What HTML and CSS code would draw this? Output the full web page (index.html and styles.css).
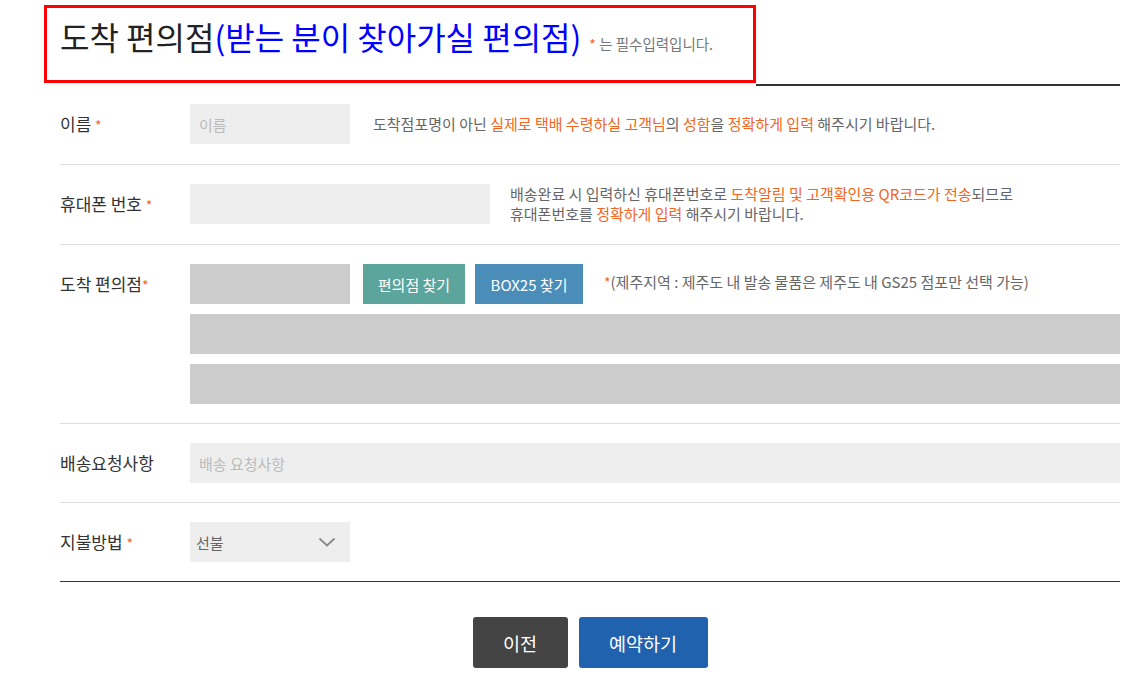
FILE: index.html
```html
<!DOCTYPE html>
<html>
  <head>
    <meta charset="utf-8">
    <link rel="stylesheet" href="styles.css">
  </head>
  <body>
    <div class="wrap">
      <div class="head">
        <div class="head-box">
          <h2 class="title">도착 편의점<span class="title-blue">(받는 분이 찾아가실 편의점)</span></h2>
          <span class="req-note"><span class="star">*</span> 는 필수입력입니다.</span>
        </div>
        <div class="head-line"></div>
      </div>

      <div class="form">
        <div class="row">
          <div class="label">이름 <span class="star">*</span></div>
          <div class="field">
            <input class="input input-short" type="text" placeholder="이름">
            <p class="help help-one">도착점포명이 아닌 <span class="hl">실제로 택배 수령하실 고객님</span>의 <span class="hl">성함</span>을 <span class="hl">정확하게 입력</span> 해주시기 바랍니다.</p>
          </div>
        </div>

        <div class="row">
          <div class="label">휴대폰 번호 <span class="star">*</span></div>
          <div class="field">
            <input class="input input-mid" type="text">
            <p class="help help-two">배송완료 시 입력하신 휴대폰번호로 <span class="hl">도착알림 및 고객확인용 QR코드가 전송</span>되므로<br>휴대폰번호를 <span class="hl">정확하게 입력</span> 해주시기 바랍니다.</p>
          </div>
        </div>

        <div class="row">
          <div class="label">도착 편의점<span class="star">*</span></div>
          <div class="field-stack">
            <div class="field">
              <input class="input input-short input-dark" type="text" readonly>
              <button class="btn-find btn-store">편의점 찾기</button>
              <button class="btn-find btn-box">BOX25 찾기</button>
              <p class="help help-jeju"><span class="star">*</span>(제주지역 : 제주도 내 발송 물품은 제주도 내 GS25 점포만 선택 가능)</p>
            </div>
            <input class="input input-full input-dark" type="text" readonly>
            <input class="input input-full input-dark" type="text" readonly>
          </div>
        </div>

        <div class="row">
          <div class="label">배송요청사항</div>
          <div class="field field-grow">
            <input class="input input-full" type="text" placeholder="배송 요청사항">
          </div>
        </div>

        <div class="row row-last">
          <div class="label">지불방법 <span class="star">*</span></div>
          <div class="field">
            <div class="select">
              <span>선불</span>
              <svg width="18" height="10" viewBox="0 0 18 10"><path d="M1.5 1.5 L9 8.5 L16.5 1.5" fill="none" stroke="#888" stroke-width="1.8"/></svg>
            </div>
          </div>
        </div>
      </div>

      <div class="actions">
        <button class="btn-prev">이전</button>
        <button class="btn-submit">예약하기</button>
      </div>
    </div>
  </body>
</html>
```

FILE: styles.css
```css
body{
  margin: 0;
  font-family: "Noto Sans CJK KR", "Noto Sans", sans-serif;
  color: #333;
  background: #fff;
}
.wrap{
  width: 1060px;
  margin-left: 60px;
  padding-top: 5px;
}
.head{
  display: flex;
  margin-left: -16px;
}
.head-box{
  width: 712px;
  height: 78px;
  border: 3px solid #ff0000;
  display: flex;
  align-items: flex-start;
  padding: 6px 0 0 13px;
  box-sizing: border-box;
}
.title{
  margin: 0;
  font-size: 32px;
  line-height: 44px;
  font-weight: normal;
  color: #222;
}
.title-blue{
  color: #0000ff;
}
.req-note{
  font-size: 14.5px;
  line-height: 20px;
  color: #777;
  margin: 20px 0 0 8px;
}
.star{
  color: #f26522;
  font-size: 14px;
}
.head-line{
  flex: 1;
  align-self: flex-end;
  border-bottom: 2px solid #333;
  margin-bottom: -3px;
}
.form{
  margin-top: 2px;
  border-bottom: 1px solid #333;
}
.row{
  display: flex;
  padding: 19px 0;
  border-bottom: 1px solid #ddd;
}
.row-last{
  border-bottom: none;
  padding-bottom: 18px;
}
.label{
  width: 130px;
  flex-shrink: 0;
  font-size: 17px;
  line-height: 40px;
  color: #333;
}
.field{
  display: flex;
  align-items: center;
  height: 40px;
}
.field-grow{
  flex: 1;
}
.field-stack{
  flex: 1;
  display: flex;
  flex-direction: column;
  gap: 10px;
}
.input{
  height: 40px;
  border: none;
  background: #eee;
  padding: 0 9px;
  box-sizing: border-box;
  font-family: inherit;
  font-size: 15px;
  color: #333;
  outline: none;
}
.input::placeholder{
  color: #bbb;
}
.input-short{
  width: 160px;
}
.input-mid{
  width: 300px;
}
.input-full{
  width: 100%;
}
.input-dark{
  background: #ccc;
}
.help{
  margin: 0;
  font-size: 15px;
  line-height: 20px;
  color: #666;
}
.help-one{
  margin-left: 23px;
}
.help-two{
  margin-left: 20px;
}
.help-jeju{
  margin-left: 21px;
  margin-top: -5px;
}
.hl{
  color: #f26522;
}
.btn-find{
  height: 40px;
  border: none;
  color: #fff;
  font-family: inherit;
  font-size: 15px;
  padding: 0;
  cursor: pointer;
}
.btn-store{
  background: #5ba59d;
  margin-left: 13px;
  width: 102px;
}
.btn-box{
  background: #4a8db8;
  margin-left: 10px;
  width: 108px;
}
.select{
  width: 160px;
  height: 40px;
  background: #eee;
  display: flex;
  align-items: center;
  justify-content: space-between;
  padding: 0 14px 0 6px;
  box-sizing: border-box;
  font-size: 15px;
  color: #666;
}
.actions{
  display: flex;
  justify-content: center;
  gap: 11px;
  margin-top: 35px;
}
.btn-prev,
.btn-submit{
  height: 51px;
  border: none;
  border-radius: 3px;
  color: #fff;
  font-family: inherit;
  font-size: 18.5px;
  cursor: pointer;
}
.btn-prev{
  width: 95px;
  background: #444;
}
.btn-submit{
  width: 129px;
  background: #2062ae;
}
```
